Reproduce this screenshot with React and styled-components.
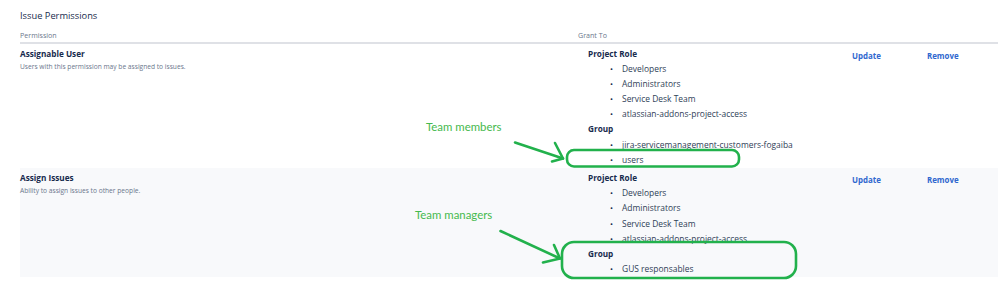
import React from "react";
import styled, { createGlobalStyle } from "styled-components";

const Global = createGlobalStyle`
  html, body { margin: 0; padding: 0; background: #ffffff; }
  body { font-family: "Open Sans", "Noto Sans", sans-serif; color: #172b4d; }
  * { box-sizing: border-box; }
`;

const Page = styled.div`
  position: relative;
  width: 998px;
  height: 286px;
  overflow: hidden;
  padding-left: 20px;
`;

const Title = styled.h2`
  margin: 8px 0 6px;
  font-size: 9.3px;
  line-height: 15px;
  font-weight: 400;
  color: #172b4d;
`;

const Grid = styled.div`
  display: grid;
  grid-template-columns: 558px 264px 1fr;
`;

const HeaderRow = styled(Grid)`
  border-bottom: 2px solid #dfe1e6;
`;

const HeadCell = styled.div`
  font-size: 7.1px;
  line-height: 13px;
  color: #6b778c;
`;

const Row = styled(Grid)`
  padding: 2px 0 1.5px;
  background: ${(p) => (p.$shaded ? "#f8f9fb" : "#ffffff")};
`;

const PermCell = styled.div`
  display: flex;
  flex-direction: column;
`;

const PermName = styled.div`
  font-size: 8.2px;
  line-height: 15.1px;
  font-weight: 700;
  color: #172b4d;
`;

const PermDesc = styled.div`
  font-size: 6.65px;
  line-height: 12px;
  color: #6b778c;
`;

const GrantCell = styled.div`
  padding-left: 10px;
`;

const GrantHead = styled.div`
  font-size: 8.2px;
  line-height: 15.1px;
  font-weight: 700;
  color: #172b4d;
`;

const List = styled.ul`
  margin: 0;
  padding: 0 0 0 22px;
  list-style: none;
`;

const Item = styled.li`
  display: flex;
  font-size: 8.45px;
  line-height: 15.1px;
  color: #2f3e57;
  &::before {
    content: "•";
    width: 12px;
    flex: none;
    font-size: 8px;
    color: #172b4d;
  }
`;

const Actions = styled.div`
  display: flex;
  align-items: flex-start;
  padding: 3px 0 0 10px;
`;

const ActionLink = styled.a`
  width: 75px;
  font-size: 7.9px;
  line-height: 15px;
  font-weight: 700;
  color: #3068cf;
  text-decoration: none;
  cursor: pointer;
`;

const Overlay = styled.svg`
  position: absolute;
  left: 0;
  top: 0;
  pointer-events: none;
`;

const Note = styled.div`
  position: absolute;
  left: ${(p) => p.$x}px;
  top: ${(p) => p.$y}px;
  font-family: Lato, "Open Sans", sans-serif;
  font-size: 11.4px;
  line-height: 14px;
  color: #45b94d;
  white-space: nowrap;
`;

const permissions = [
  {
    name: "Assignable User",
    desc: "Users with this permission may be assigned to issues.",
    roles: ["Developers", "Administrators", "Service Desk Team", "atlassian-addons-project-access"],
    groups: ["jira-servicemanagement-customers-fogaiba", "users"],
  },
  {
    name: "Assign Issues",
    desc: "Ability to assign issues to other people.",
    roles: ["Developers", "Administrators", "Service Desk Team", "atlassian-addons-project-access"],
    groups: ["GUS responsables"],
  },
];

const GREEN = "#22b14c";

export default function App() {
  return (
    <>
      <Global />
      <Page>
        <Title>Issue Permissions</Title>
        <HeaderRow>
          <HeadCell>Permission</HeadCell>
          <HeadCell>Grant To</HeadCell>
          <HeadCell />
        </HeaderRow>
        {permissions.map((p, i) => (
          <Row key={p.name} $shaded={i % 2 === 1}>
            <PermCell>
              <PermName>{p.name}</PermName>
              <PermDesc>{p.desc}</PermDesc>
            </PermCell>
            <GrantCell>
              <GrantHead>Project Role</GrantHead>
              <List>
                {p.roles.map((r) => (
                  <Item key={r}>{r}</Item>
                ))}
              </List>
              <GrantHead>Group</GrantHead>
              <List>
                {p.groups.map((g) => (
                  <Item key={g}>{g}</Item>
                ))}
              </List>
            </GrantCell>
            <Actions>
              <ActionLink>Update</ActionLink>
              <ActionLink>Remove</ActionLink>
            </Actions>
          </Row>
        ))}

        <Note $x={426} $y={120}>Team members</Note>
        <Note $x={415} $y={208}>Team managers</Note>

        <Overlay width="998" height="286" viewBox="0 0 998 286">
          <g fill="none" stroke={GREEN} strokeWidth="2.6" strokeLinecap="round" strokeLinejoin="round">
            <path d="M515 142.5 L563 158.5" />
            <path d="M555 143 L563 158.5 L552 161.5" />
            <rect x="567" y="150" width="172" height="16.5" rx="7" />
            <path d="M500.5 231 L560 258.5" />
            <path d="M554 245 L560 258.5 L543 262.5" />
            <rect x="562" y="242" width="234" height="36" rx="12" />
          </g>
        </Overlay>
      </Page>
    </>
  );
}
